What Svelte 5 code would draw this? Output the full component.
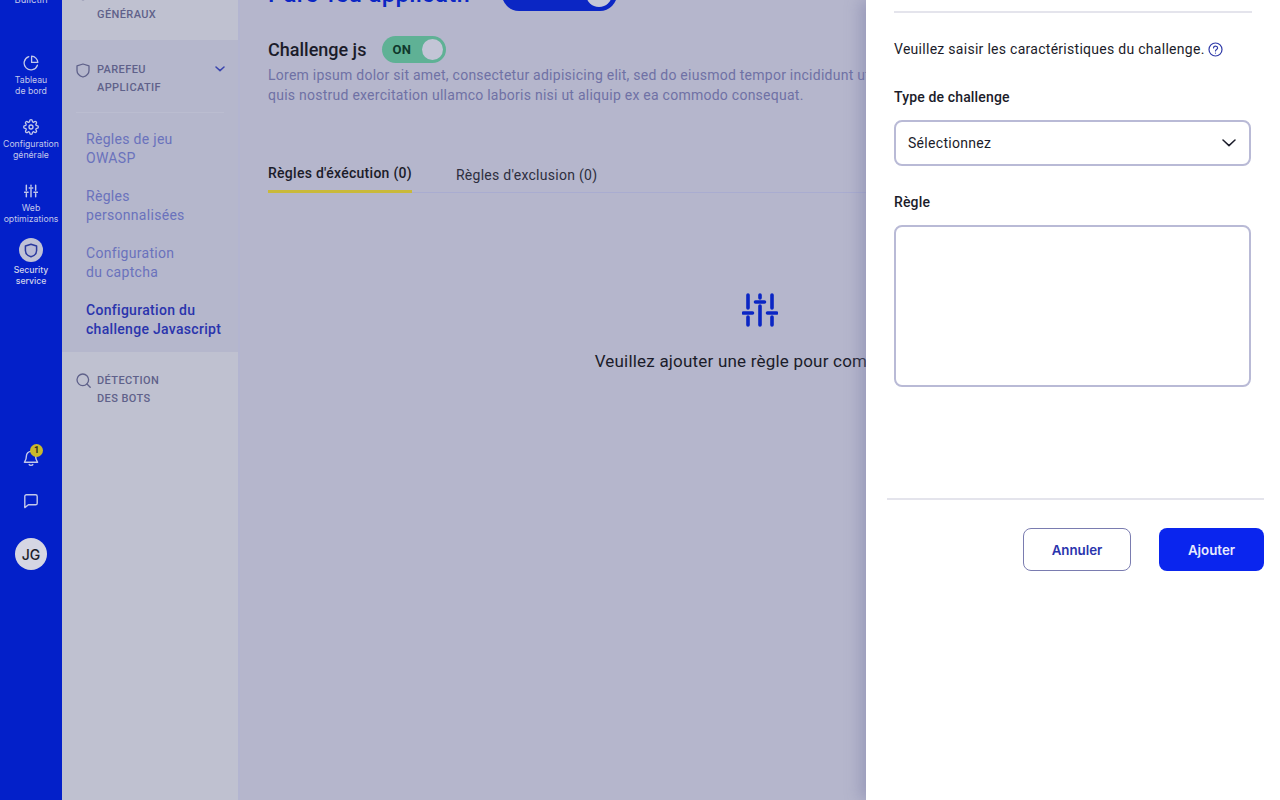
<script>
  const railItems = [
    { id: 'dash', label: ['Tableau', 'de bord'] },
    { id: 'conf', label: ['Configuration', 'générale'] },
    { id: 'web', label: ['Web', 'optimizations'] }
  ];
  const links = [
    ['Règles de jeu', 'OWASP'],
    ['Règles', 'personnalisées'],
    ['Configuration', 'du captcha']
  ];
</script>

{#snippet sliders(size, weight)}
  <svg width={size} height={size} viewBox="0 0 36 36" fill="none" stroke="currentColor" stroke-width={weight} stroke-linecap="round">
    <path d="M6 3v13M6 25v8M18 3v3M18 14v19M30 3v13M30 25v8M1.500 21h9M13.500 10h9M25.500 21h9" />
  </svg>
{/snippet}

<div class="page">
  <nav class="rail">
    <div class="rail-top">Bulletin</div>
    {#each railItems as item}
      <div class="rail-item">
        {#if item.id === 'dash'}
          <svg width="16" height="16" viewBox="0 0 16 16" fill="none" stroke="currentColor" stroke-width="1.300" stroke-linecap="round" stroke-linejoin="round">
            <path d="M14.400 10.200A6.800 6.800 0 1 1 5.800 1.600" /><path d="M14.800 7.400A6.600 6.600 0 0 0 8.600 1.200v6.200z" />
          </svg>
        {:else if item.id === 'conf'}
          <svg width="16" height="16" viewBox="0 0 24 24" fill="none" stroke="currentColor" stroke-width="2" stroke-linecap="round" stroke-linejoin="round">
            <circle cx="12" cy="12" r="3" />
            <path d="M19.400 15a1.650 1.650 0 0 0 .33 1.820l.06.06a2 2 0 1 1-2.830 2.830l-.06-.06a1.650 1.650 0 0 0-2.820 1.170V21a2 2 0 0 1-4 0v-.09a1.650 1.650 0 0 0-2.820-1.200l-.06.06a2 2 0 1 1-2.830-2.830l.06-.06a1.650 1.650 0 0 0-1.170-2.820H3a2 2 0 0 1 0-4h.09a1.650 1.650 0 0 0 1.200-2.820l-.06-.06a2 2 0 1 1 2.830-2.830l.06.06a1.650 1.650 0 0 0 1.820.33H9a1.650 1.650 0 0 0 1-1.510V3a2 2 0 0 1 4 0v.09a1.650 1.650 0 0 0 2.820 1.200l.06-.06a2 2 0 1 1 2.830 2.830l-.06.06a1.650 1.650 0 0 0-.33 1.820V9a1.650 1.650 0 0 0 1.510 1H21a2 2 0 0 1 0 4h-.09a1.650 1.650 0 0 0-1.510 1z" />
          </svg>
        {:else}
          <span class="web-icon">{@render sliders(14, 3.800)}</span>
        {/if}
        <span class="rail-label">{item.label[0]}<br />{item.label[1]}</span>
      </div>
    {/each}
    <div class="rail-item security">
      <span class="shield-disc">
        <svg width="14" height="15" viewBox="0 0 14 15" fill="#b9bbd6" stroke="#2b3a9e" stroke-width="1.500" stroke-linejoin="round">
          <path d="M7 1.200 12.600 3v4.400c0 3.200-2.400 5.400-5.600 6.400C3.800 12.800 1.400 10.600 1.400 7.400V3z" />
        </svg>
      </span>
      <span class="rail-label">Security<br />service</span>
    </div>
    <div class="rail-bottom">
      <span class="bell">
        <svg width="16" height="18" viewBox="0 0 16 18" fill="none" stroke="currentColor" stroke-width="1.400" stroke-linecap="round" stroke-linejoin="round">
          <path d="M8 2.400a4.600 4.600 0 0 0-4.600 4.600c0 4-1.700 5.600-2 6.200h13.200c-.3-.6-2-2.200-2-6.200A4.600 4.600 0 0 0 8 2.400zM6.200 15.600c.5 1 3.100 1 3.600 0" />
        </svg>
        <span class="badge">1</span>
      </span>
      <svg class="chat" width="16" height="16" viewBox="0 0 16 16" fill="none" stroke="currentColor" stroke-width="1.400" stroke-linejoin="round">
        <path d="M3.400 1.800h9.200c.9 0 1.600.7 1.600 1.600v6.800c0 .9-.7 1.600-1.600 1.600H5.400l-3.600 2.800V3.400c0-.9.7-1.600 1.600-1.600z" />
      </svg>
      <span class="avatar">JG</span>
    </div>
  </nav>

  <aside class="subnav">
    <div class="group first">
      <svg class="gicon" width="14" height="14" viewBox="0 0 14 14" fill="none" stroke="currentColor" stroke-width="1.400"><circle cx="7" cy="7" r="4.500" /></svg>
      <span class="gtitle">PARAMÈTRES<br />GÉNÉRAUX</span>
    </div>
    <div class="group active">
      <div class="ghead">
        <svg class="gicon" width="14" height="15" viewBox="0 0 14 15" fill="none" stroke="currentColor" stroke-width="1.300" stroke-linejoin="round">
          <path d="M7 1 13 2.800v4.600c0 3.200-2.600 5.400-6 6.600-3.400-1.200-6-3.400-6-6.600V2.800z" />
        </svg>
        <span class="gtitle">PAREFEU<br />APPLICATIF</span>
        <svg class="chev" width="10" height="6" viewBox="0 0 10 6" fill="none" stroke="currentColor" stroke-width="1.500" stroke-linecap="round" stroke-linejoin="round"><path d="M1 1l4 3.600L9 1" /></svg>
      </div>
      <ul class="links">
        {#each links as l}
          <li>{l[0]}<br />{l[1]}</li>
        {/each}
        <li class="current">Configuration du<br />challenge Javascript</li>
      </ul>
    </div>
    <div class="group last">
      <svg class="gicon" width="15" height="15" viewBox="0 0 15 15" fill="none" stroke="currentColor" stroke-width="1.300" stroke-linecap="round"><circle cx="6.800" cy="6.800" r="5.800" /><path d="M11 11l3.200 3.200" /></svg>
      <span class="gtitle">DÉTECTION<br />DES BOTS</span>
    </div>
  </aside>

  <main class="main">
    <div class="title-row">
      <h1>Pare-feu applicatif</h1>
      <span class="big-toggle"><span class="big-knob"></span></span>
    </div>
    <div class="challenge-row">
      <h2>Challenge js</h2>
      <span class="toggle"><b>ON</b><span class="knob"></span></span>
    </div>
    <p class="lorem">Lorem ipsum dolor sit amet, consectetur adipisicing elit, sed do eiusmod tempor incididunt ut labore et dolore magna aliqua. Ut enim ad minim veniam,<br />quis nostrud exercitation ullamco laboris nisi ut aliquip ex ea commodo consequat.</p>
    <div class="tabs">
      <span class="tab on">Règles d'éxécution (0)</span>
      <span class="tab">Règles d'exclusion (0)</span>
    </div>
    <div class="empty">
      {@render sliders(36, 3.600)}
      <p>Veuillez ajouter une règle pour commencer</p>
    </div>
  </main>

  <section class="drawer">
    <div class="drawer-body">
      <p class="intro">Veuillez saisir les caractéristiques du challenge.
        <svg width="15" height="15" viewBox="0 0 15 15" fill="none" stroke="#2f3aa8" stroke-width="1.200" stroke-linecap="round">
          <circle cx="7.500" cy="7.500" r="6.500" /><path d="M5.500 5.900c.2-2.500 4.100-2.300 4.100 0 0 1.500-2.100 1.500-2.100 3" /><path d="M7.500 11v.1" />
        </svg>
      </p>
      <label class="field-label" for="type">Type de challenge</label>
      <div class="select" id="type">
        <span>Sélectionnez</span>
        <svg width="14" height="8" viewBox="0 0 14 8" fill="none" stroke="#1c1d2b" stroke-width="1.500" stroke-linecap="round" stroke-linejoin="round"><path d="M1 1l6 5.600L13 1" /></svg>
      </div>
      <label class="field-label rule" for="rule">Règle</label>
      <textarea id="rule"></textarea>
    </div>
    <div class="drawer-foot">
      <button class="ghost">Annuler</button>
      <button class="primary">Ajouter</button>
    </div>
  </section>
</div>

<style>
  :global(body) {
    background: #b5b6cc;
  }

  .page {
    position: relative;
    display: flex;
    height: 800px;
    overflow: hidden;
    font-family: Roboto, "Liberation Sans", sans-serif;
    background: #b5b6cc;
  }

  .rail {
    flex: none;
    display: flex;
    flex-direction: column;
    align-items: center;
    width: 62px;
    color: #c3c8ea;
    background: #0320c9;
  }

  .rail-top {
    height: 61px;
    margin-top: -6px;
    font-family: Inter, sans-serif;
    font-size: 9.500px;
    line-height: 11px;
  }

  .rail-item {
    display: flex;
    flex-direction: column;
    align-items: center;
    height: 64px;
    gap: 4px;
  }

  .rail-item svg {
    flex: none;
  }

  .web-icon {
    display: flex;
    align-items: center;
    height: 16px;
  }

  .rail-label {
    font-family: Inter, sans-serif;
    font-size: 8.700px;
    line-height: 10.500px;
    text-align: center;
    white-space: nowrap;
  }

  .security {
    height: auto;
    margin-top: -9px;
    gap: 3px;
  }

  .security .rail-label {
    font-weight: 500;
    line-height: 11px;
    color: #d2d5ea;
  }

  .shield-disc {
    display: flex;
    align-items: center;
    justify-content: center;
    width: 24px;
    height: 24px;
    border-radius: 50%;
    background: #c0c2d6;
  }

  .rail-bottom {
    display: flex;
    flex-direction: column;
    align-items: center;
    margin-top: 162px;
  }

  .bell {
    position: relative;
    display: flex;
    height: 18px;
  }

  .badge {
    position: absolute;
    top: -5px;
    left: 7px;
    width: 13px;
    height: 13px;
    border-radius: 50%;
    font-size: 9px;
    font-weight: 700;
    line-height: 13px;
    text-align: center;
    color: #2a2a20;
    background: #c9b92c;
  }

  .chat {
    margin-top: 26px;
  }

  .avatar {
    display: flex;
    align-items: center;
    justify-content: center;
    width: 32px;
    height: 32px;
    margin-top: 29px;
    border-radius: 50%;
    font-family: Inter, sans-serif;
    font-size: 14px;
    font-weight: 500;
    color: #1c1d2b;
    background: #d5d6e3;
  }

  .subnav {
    flex: none;
    width: 176px;
    background: #bfc1d0;
    border-right: 2px solid #b3b5d0;
  }

  .group {
    position: relative;
    padding-left: 35px;
  }

  .first {
    height: 53px;
    margin-top: -13px;
    padding-top: 1px;
    box-sizing: border-box;
  }

  .gicon {
    position: absolute;
    left: 14px;
    color: #5f618a;
  }

  .gtitle {
    display: block;
    font-size: 11px;
    font-weight: 500;
    line-height: 18px;
    letter-spacing: 0.4px;
    color: #5f618a;
  }

  .active {
    height: 312px;
    padding-left: 0;
    background: #b5b7cc;
  }

  .ghead {
    position: relative;
    height: 73px;
    margin: 0 14px;
    padding: 21px 0 0 21px;
    box-sizing: border-box;
    border-bottom: 1px solid #bbbdd0;
  }

  .ghead .gicon {
    top: 23px;
    left: 0;
  }

  .chev {
    position: absolute;
    top: 26px;
    right: -1px;
    color: #3a45ae;
  }

  .links {
    margin: 0;
    padding: 17px 0 0 24px;
    list-style: none;
    font-size: 14px;
    line-height: 19px;
    letter-spacing: 0.3px;
    color: #6a72bc;
  }

  .links li {
    margin-bottom: 19px;
    white-space: nowrap;
  }

  .links .current {
    font-weight: 500;
    color: #2a34ad;
  }

  .last {
    padding-top: 20px;
  }

  .last .gicon {
    top: 21px;
  }

  .main {
    flex: 1;
    min-width: 0;
    padding: 0 28px;
    background: #b5b6cc;
  }

  .title-row {
    display: flex;
    align-items: center;
    gap: 30px;
    height: 34px;
    margin-top: -23px;
  }

  h1 {
    margin: 0;
    font-size: 24px;
    font-weight: 500;
    letter-spacing: 0.3px;
    white-space: nowrap;
    color: #0b26c4;
  }

  .big-toggle {
    position: relative;
    width: 115px;
    height: 34px;
    border-radius: 17px;
    background: #0b26c4;
  }

  .big-knob {
    position: absolute;
    top: 4px;
    right: 5px;
    width: 26px;
    height: 26px;
    border-radius: 50%;
    background: #c5c7d6;
  }

  .challenge-row {
    display: flex;
    align-items: center;
    gap: 15px;
    height: 27px;
    margin-top: 25px;
  }

  h2 {
    margin: 0;
    font-size: 18px;
    font-weight: 500;
    line-height: 27px;
    color: #1b1c2a;
  }

  .toggle {
    position: relative;
    display: flex;
    align-items: center;
    box-sizing: border-box;
    width: 64px;
    height: 27px;
    margin-left: 1px;
    padding-left: 10px;
    border-radius: 14px;
    background: #5fb195;
  }

  .toggle b {
    font-size: 13px;
    font-weight: 700;
    letter-spacing: 0.4px;
    color: #10382c;
  }

  .knob {
    position: absolute;
    top: 3px;
    right: 3px;
    width: 21px;
    height: 21px;
    border-radius: 50%;
    background: #c3c5d6;
  }

  .lorem {
    width: 900px;
    margin: 2px 0 0;
    font-size: 14px;
    line-height: 20px;
    letter-spacing: 0.25px;
    white-space: nowrap;
    color: #6f71a5;
  }

  .tabs {
    display: flex;
    align-items: flex-end;
    gap: 44px;
    height: 65px;
    margin-top: 22px;
    border-bottom: 1px solid #a9acd0;
    font-size: 14px;
    letter-spacing: 0.27px;
  }

  .tab {
    padding-bottom: 9px;
    color: #2d2e3e;
  }

  .tab.on {
    margin-bottom: -1px;
    padding-bottom: 9px;
    border-bottom: 3px solid #c9b93a;
    font-weight: 500;
    color: #1b1c2a;
  }

  .empty {
    display: flex;
    flex-direction: column;
    align-items: center;
    margin-top: 99px;
    color: #0b26c4;
  }

  .empty p {
    margin: 21px 0 0;
    font-size: 17px;
    line-height: 24px;
    letter-spacing: 0.2px;
    white-space: nowrap;
    color: #1b1c2a;
  }

  .drawer {
    position: absolute;
    top: 0;
    right: 0;
    bottom: 0;
    display: flex;
    flex-direction: column;
    width: 414px;
    box-sizing: border-box;
    padding: 0 16px 0 21px;
    background: #fff;
    box-shadow: -6px 0 14px rgba(120, 122, 165, 0.45);
  }

  .drawer-body {
    height: 498px;
    box-sizing: border-box;
    margin: 0 12px 0 7px;
    padding-top: 39px;
    background: linear-gradient(#e4e4ec, #e4e4ec) 0 11px / 100% 2px no-repeat;
  }

  .intro {
    display: flex;
    align-items: center;
    gap: 3px;
    margin: 0;
    font-size: 14px;
    line-height: 20px;
    letter-spacing: 0.28px;
    color: #1b1c2a;
  }

  .field-label {
    display: block;
    margin-top: 28px;
    font-size: 14px;
    font-weight: 500;
    line-height: 20px;
    letter-spacing: 0.15px;
    color: #1b1c2a;
  }

  .select {
    display: flex;
    align-items: center;
    justify-content: space-between;
    box-sizing: border-box;
    width: 357px;
    height: 46px;
    margin-top: 13px;
    padding: 0 13px 0 12px;
    border: 2px solid #b9bad6;
    border-radius: 8px;
    font-size: 14px;
    letter-spacing: 0.3px;
    color: #1b1c2a;
  }

  .field-label.rule {
    margin-top: 26px;
  }

  textarea {
    display: block;
    box-sizing: border-box;
    width: 357px;
    height: 162px;
    margin-top: 13px;
    border: 2px solid #b9bad6;
    border-radius: 8px;
    resize: none;
    outline: none;
  }

  .drawer-foot {
    display: flex;
    justify-content: flex-end;
    gap: 28px;
    padding-top: 28px;
    border-top: 2px solid #e4e4ec;
  }

  button {
    height: 43px;
    border-radius: 8px;
    font-family: Inter, sans-serif;
    font-size: 13.300px;
    font-weight: 600;
  }

  .ghost {
    width: 108px;
    border: 1px solid #7a7cb0;
    color: #2a34ad;
    background: #fff;
  }

  .primary {
    width: 105px;
    border: 0;
    color: #e8eafc;
    background: #0a25ee;
  }
</style>
